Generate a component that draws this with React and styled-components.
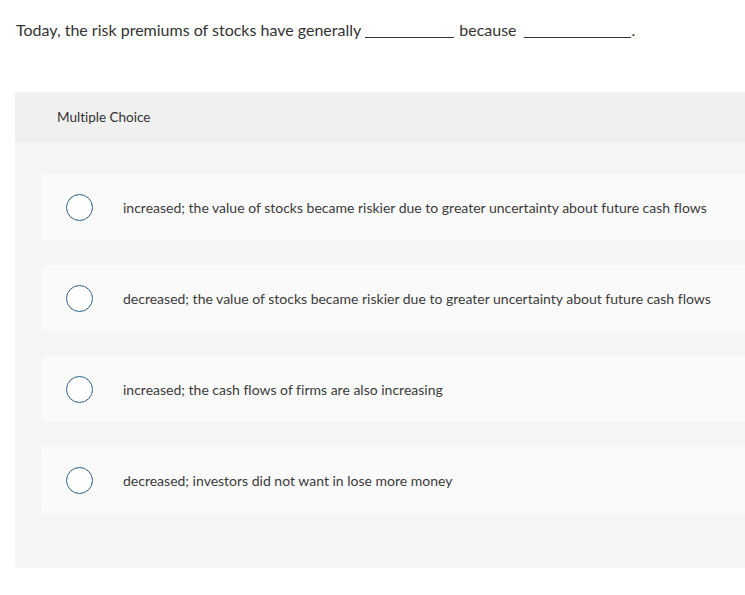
import React from "react";
import styled, { createGlobalStyle } from "styled-components";

const GlobalStyle = createGlobalStyle`
  html, body {
    margin: 0;
    padding: 0;
    overflow-x: hidden;
    background: #fff;
  }
  body {
    font-family: "Lato", "Open Sans", sans-serif;
    font-variant-ligatures: none;
    color: #333;
  }
`;

const Page = styled.div`
  padding: 20px 0 0 15px;
`;

const Question = styled.p`
  margin: 0 0 52px 1px;
  font-size: 16px;
  line-height: 20px;
  color: #333;
`;

const Blank = styled.span`
  display: inline-block;
  width: ${(p) => p.w}px;
  border-bottom: 1px solid #333;
  margin: 0 ${(p) => p.after}px 0 ${(p) => p.gap}px;
  vertical-align: -2px;
`;

const Panel = styled.section`
  width: 740px;
  background: #f5f5f5;
  border-radius: 3px;
  overflow: hidden;
`;

const PanelHeader = styled.header`
  height: 50px;
  display: flex;
  align-items: center;
  padding-left: 42px;
  background: #f0f0f0;
  font-size: 13.5px;
  color: #333;
`;

const Choices = styled.div`
  display: flex;
  flex-direction: column;
  gap: 25px;
  padding: 32px 0 55px 26px;
`;

const Choice = styled.label`
  height: 66px;
  display: flex;
  align-items: center;
  gap: 30px;
  padding-left: 25px;
  background: #fafafa;
  border-radius: 3px;
  font-size: 14px;
  color: #3a3a3a;
  cursor: pointer;
`;

const Radio = styled.span`
  width: 25px;
  height: 25px;
  flex: none;
  border: 1.5px solid #2b5d8c;
  border-radius: 50%;
  background: #fff;
`;

const choices = [
  "increased; the value of stocks became riskier due to greater uncertainty about future cash flows",
  "decreased; the value of stocks became riskier due to greater uncertainty about future cash flows",
  "increased; the cash flows of firms are also increasing",
  "decreased; investors did not want in lose more money",
];

export default function App() {
  return (
    <Page>
      <GlobalStyle />
      <Question>
        Today, the risk premiums of stocks have generally
        <Blank w={89} gap={4} after={5} />
        because
        <Blank w={107} gap={7} after={1} />.
      </Question>
      <Panel>
        <PanelHeader>Multiple Choice</PanelHeader>
        <Choices>
          {choices.map((c) => (
            <Choice key={c}>
              <Radio />
              {c}
            </Choice>
          ))}
        </Choices>
      </Panel>
    </Page>
  );
}
